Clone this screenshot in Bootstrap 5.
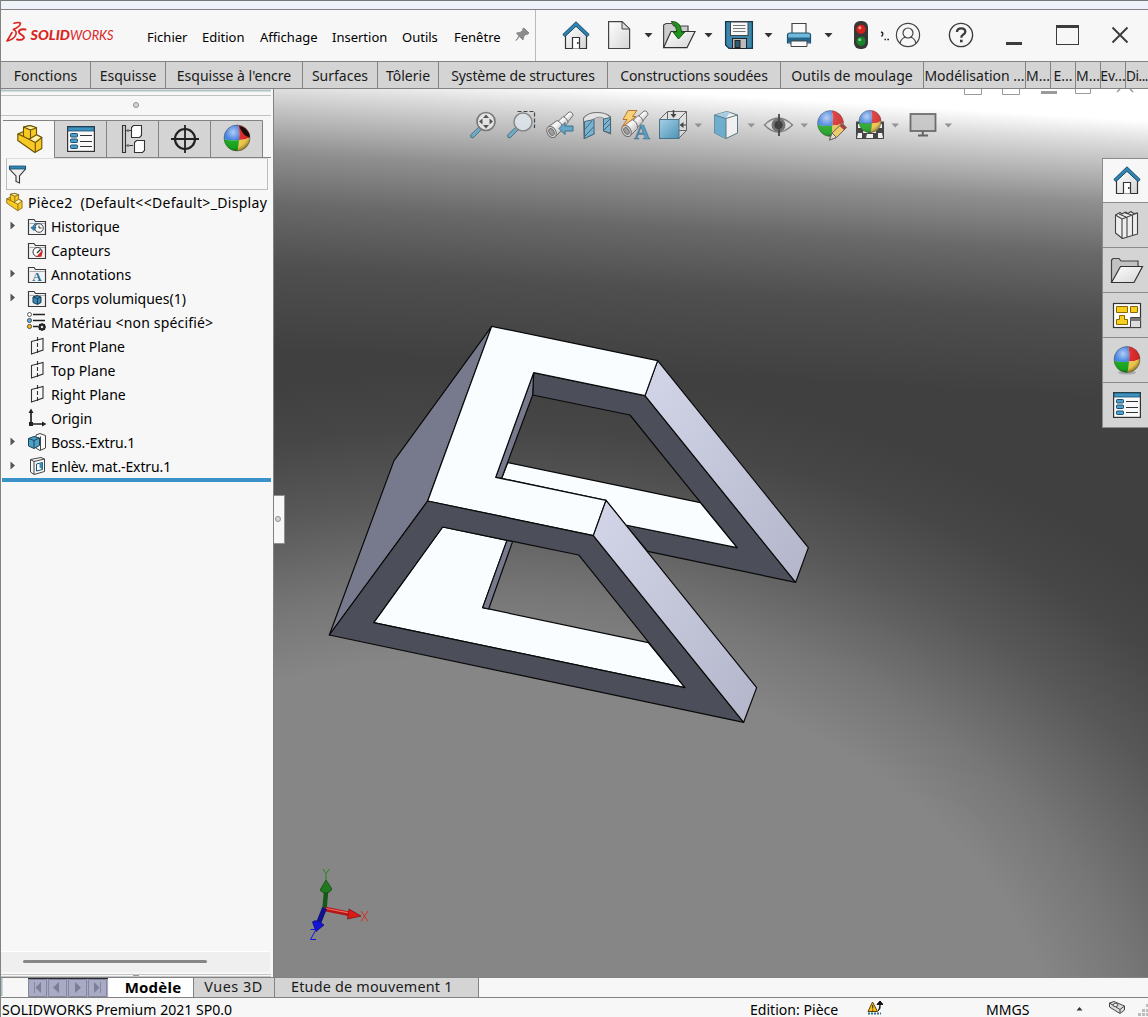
<!DOCTYPE html>
<html lang="fr">
<head>
<meta charset="utf-8">
<meta name="viewport" content="width=device-width, initial-scale=1">
<title>SOLIDWORKS Premium 2021 SP0.0</title>
<link href="https://cdn.jsdelivr.net/npm/bootstrap@5.3.0/dist/css/bootstrap.min.css" rel="stylesheet">
<style>
:root{--line:#828282;--pane:#f7f7f7;--tab:#d4d4d4}
body{width:1148px;height:1017px;overflow:hidden;background:var(--pane);font-family:"Noto Sans","Open Sans",sans-serif;font-size:14px;color:#000;line-height:1}
svg{display:block;flex:none}
.app{height:1017px;border-left:1px solid var(--line)}
.strip{height:10px;flex:none;background:#eef3fa;border-top:1px solid #777;border-bottom:1px solid var(--line)}
.head{height:51px;flex:none}
.menus{width:420px;border-right:1px solid #bbb;font-size:13px;padding-left:31px}
.menus span{white-space:nowrap;padding-top:4px}
.m1{width:55px}.m2{width:58px}.m3{width:72px}.m4{width:70px}.m5{width:52px}.m6{width:59px}
.cmds{height:28px;flex:none;background:var(--tab);border-top:1px solid var(--line);border-bottom:1px solid var(--line);font-size:14px;color:#1a1a1a}
.cmds>div{border-right:1px solid var(--line);white-space:nowrap;flex:none;padding-top:2px}
.w1{width:90px}.w2{width:75px}.w3{width:137px}.w4{width:75px}.w5{width:61px}.w6{width:169px}.w7{width:173px}.w8{width:143px}.w9{width:102px}.w10{width:25px}
.cmds>.w11{width:22px;border-right:0;font-size:13.6px;letter-spacing:-.45px}
.side{width:273px;border-right:1px solid var(--line);background:var(--pane)}
.tree-row{height:24px;white-space:nowrap;font-size:14px}
.tree-row span{padding-top:2px}
.wide{letter-spacing:.32px}
.mid{letter-spacing:.17px}
.soft{letter-spacing:.06px}
.tight{letter-spacing:-.12px}
.filter{height:32px;width:262px;margin-left:5px;border:1px solid #bdbdbd;border-top-color:#ddd}
.rollbar{height:4px;width:269px;margin-left:1px;background:#3a92c8}
.hbar{height:21px;width:269px;background:#efefef;border-top:1px solid #fff;padding:8px 0 0 22px}
.hbar div{height:3px;width:184px;border-radius:2px;background:#868686}
.view{position:relative;overflow:hidden}
.scene{position:absolute;left:0;top:0}
.hud{position:absolute;left:190px;top:15px;opacity:.88}
.taskpane{position:absolute;right:0;top:69px;width:46px;border:1px solid #8a8a8a;border-right:0;border-bottom:0}
.taskpane div{height:45px;background:var(--tab);border-bottom:1px solid #8a8a8a}
.taskpane div:first-child{background:var(--pane);height:44px}
.grip{position:absolute;left:-1px;top:406px;width:12px;height:49px;background:var(--pane);border:1px solid #8f8f8f;border-left:0}
.btabs{height:21px;flex:none;border-top:1px solid var(--line);border-bottom:1px solid var(--line);font-size:14.4px}
.btabs .t{border-right:1px solid var(--line);background:var(--tab);white-space:nowrap;color:#1a1a1a}
.btabs .t1{width:85px;font-size:15px;letter-spacing:.2px;padding-left:4px}
.btabs .t2{width:81px;padding-right:1px;letter-spacing:.5px}
.btabs .t3{width:204px;letter-spacing:.2px}
.stat{height:19px;flex:none;white-space:nowrap;font-size:14.080px;padding-top:3px;line-height:18px}
.s1{width:749px;padding-left:1px}
.s2{width:117px}
.s3{margin-top:-1px}
.s4{margin-left:103px;width:90px}
.s5{margin-top:-1px}
</style>
<script src="https://cdn.jsdelivr.net/npm/bootstrap@5.3.0/dist/js/bootstrap.bundle.min.js"></script>
</head>
<body>
<svg width="0" height="0" class="position-absolute">
<defs>
<linearGradient id="gBlue" x1="0" y1="0" x2="1" y2="1"><stop offset="0" stop-color="#9fd0ea"/><stop offset="1" stop-color="#3d8db4"/></linearGradient>
<linearGradient id="gGrey" x1="0" y1="0" x2="1" y2="1"><stop offset="0" stop-color="#fff"/><stop offset="1" stop-color="#d5d5d5"/></linearGradient>
<linearGradient id="gTube" x1="0" y1="0" x2="1" y2="1"><stop offset="0" stop-color="#c4c4c4"/><stop offset=".4" stop-color="#fff"/><stop offset="1" stop-color="#9d9d9d"/></linearGradient>
<radialGradient id="gShine" cx=".35" cy=".28" r=".75"><stop offset="0" stop-color="#fff" stop-opacity=".6"/><stop offset=".4" stop-color="#fff" stop-opacity=".05"/><stop offset=".8" stop-color="#000" stop-opacity=".05"/><stop offset="1" stop-color="#000" stop-opacity=".4"/></radialGradient>
<symbol id="home" viewBox="0 0 28 28" overflow="visible"><path d="M3.500 14V27.500H24.500V14L14 4Z" fill="url(#gGrey)" stroke="#333" stroke-width="1.200"/><path d="M10.500 27.500V16.500H17.500V27.500" fill="#fff" stroke="#333" stroke-width="1.200"/><circle cx="15.800" cy="22" r="1" fill="#333"/><path d="M.8 13.500L14 .8L27.200 13.500L25 15.500L14 5.300L3 15.500Z" fill="#2f86b5" stroke="#164a68"/></symbol>
<symbol id="ball" viewBox="0 0 28 28" overflow="visible"><clipPath id="cb"><circle cx="14" cy="14" r="13"/></clipPath><g clip-path="url(#cb)"><path d="M0 0H15Q17 7 16 16Q8 17.500 0 15Z" fill="#3f80e0"/><path d="M15 0H28V13Q22 16 16 16Q17 7 15 0Z" fill="#dc2626"/><path d="M0 15Q8 17.500 16 16Q16 23 14 28H0Z" fill="#18a81c"/><path d="M16 16Q22 16 28 13V28H14Q16 23 16 16Z" fill="#f3cb4c"/></g><circle cx="14" cy="14" r="13" fill="url(#gShine)" stroke="#333" stroke-opacity=".5" stroke-width=".8"/></symbol>
<symbol id="part" viewBox="0 0 26 28" overflow="visible"><g stroke="#6b5200" stroke-width="1.100" stroke-linejoin="round"><path d="M.8 9L6.500 6.500V2L13 .6L19.500 2.800V9.800L24.800 12.500V23.500L17.800 27.500L.8 15.500Z" fill="#f7c924"/><path d="M6.500 2L13 .6L19.500 2.800L13.500 5Z" fill="#fff0a8"/><path d="M12 14.300L19.500 9.800L24.800 12.500L18.300 17.500Z" fill="#fff0a8"/><path d="M.8 9L6.500 11.500V6.500M13.500 5V13.500M6.500 11.500L12 14.300M18.300 17.500V27" fill="none"/></g></symbol>
<symbol id="props" viewBox="0 0 28 26" overflow="visible"><rect x=".6" y=".6" width="26.800" height="24.800" fill="#fafafa" stroke="#333" stroke-width="1.200"/><rect x="1" y="1" width="26" height="4" fill="#3e92bf" stroke="#1b4f6e" stroke-width=".8"/><g fill="#4ba0cc" stroke="#1b4f6e"><rect x="3.500" y="7.500" width="7" height="3.500" rx=".8"/><rect x="3.500" y="13" width="7" height="3.500" rx=".8"/><rect x="3.500" y="19" width="7" height="3.500" rx=".8"/></g><path d="M13 9.500H25M13 15.500H25M13 20.500H25" stroke="#333" stroke-width="1.100"/></symbol>
<symbol id="fold" viewBox="0 0 18 17" overflow="visible"><path d="M.5 16.500V1.500H6L7.500 3.500H17.500V16.500Z" fill="#f2f2f2" stroke="#3a3a3a" stroke-width="1.150"/><path d="M1.500 5.500H17" stroke="#aaa" stroke-width="1"/></symbol>
<symbol id="plane" viewBox="0 0 18 18" overflow="visible"><path d="M3.500 4.500L15 1.500V13L3.500 17Z" fill="none" stroke="#333" stroke-width="1.100"/><path d="M9.500 0V18" stroke="#333" stroke-width="1.100" stroke-dasharray="4 2"/></symbol>
<symbol id="barrel" viewBox="0 0 28 28" overflow="visible"><g stroke="#666" stroke-width="1" stroke-linejoin="round"><path d="M17 7L23.500 1Q27 .5 27.500 4.500L21.500 12Z" fill="url(#gTube)"/><path d="M11 12L17.500 5.500Q22 7 22.500 11.500L16.500 18Z" fill="url(#gTube)"/><path d="M2.500 16L11.500 9.500Q17.500 12 17 18.500L9 26.500Z" fill="url(#gTube)"/><ellipse cx="6" cy="21" rx="4.300" ry="6" transform="rotate(-32 6 21)" fill="#dcdcdc"/><ellipse cx="6" cy="21" rx="2.300" ry="3.600" transform="rotate(-32 6 21)" fill="#999"/></g></symbol>
</defs>
</svg>

<div class="app d-flex flex-column">
<div class="strip"></div>

<header class="head d-flex">
<svg width="115" height="51" viewBox="1 10 115 51">
<g fill="none" stroke="#dc241f" stroke-linecap="round" stroke-linejoin="round"><path d="M14 23.300Q19.500 21.800 20.500 23.300Q20.500 26.500 13.500 29.500" stroke-width="1.600"/><path d="M13.500 29.500Q17.500 31 15.500 35.500Q13.500 39.500 7 41L12 32.500" stroke-width="1.600"/><path d="M25.500 29.500Q20 28.500 18.800 31.500Q19 33.500 22.500 35.500Q25.500 37.500 22.500 39.300Q20 40.300 17 39.500" stroke-width="1.900"/></g>
<text x="30.500" y="40.300" fill="#dc241f" font-family="Lato, sans-serif" font-style="italic" font-size="13.500" font-weight="900" textLength="39.500" lengthAdjust="spacingAndGlyphs">SOLID</text>
<text x="70" y="40.300" fill="#dc241f" font-family="Lato, sans-serif" font-style="italic" font-size="13.500" font-weight="400" textLength="43.500" lengthAdjust="spacingAndGlyphs">WORKS</text>
</svg>
<nav class="menus d-flex align-items-center">
<span class="m1">Fichier</span><span class="m2">Edition</span><span class="m3">Affichage</span><span class="m4">Insertion</span><span class="m5">Outils</span><span class="m6">Fenêtre</span>
<svg width="20" height="20" viewBox="512 26 20 20"><path d="M523 28L528 33L526.500 34.500L525 34L522.500 37L522 40L518.500 36.500L515 40.500L518 36L515.500 33L519 32.500L522 30.500L521.500 29Z" fill="#8b8b8b" stroke="#8b8b8b"/></svg>
</nav>
<div class="d-flex">
<svg width="65" height="51" viewBox="536 10 65 51"><use href="#home" x="562" y="21" width="28" height="28"/></svg>
<svg width="57" height="51" viewBox="601 10 57 51"><path d="M608.600 21.600H622L629.600 29V48.500H608.600Z" fill="url(#gGrey)" stroke="#444" stroke-width="1.200"/><path d="M622 21.600V29H629.600Z" fill="#ddd" stroke="#444"/><path d="M644.500 33H652.500L648.500 37.500Z" fill="#333"/></svg>
<svg width="60" height="51" viewBox="658 10 60 51"><path d="M663.600 47.500V25L666 23.500H672L674 26H688V32" fill="#ccc" stroke="#444" stroke-width="1.200"/><path d="M663.600 47.700L671 31.500H695L687 47.700Z" fill="url(#gGrey)" stroke="#333" stroke-width="1.200"/><path d="M671 21.500Q681 21 681.500 32H684.800L678.500 39L673 32H676.500Q677 26 671 21.500Z" fill="#22931f" stroke="#0b5a0c"/><path d="M704.500 33H712.500L708.500 37.500Z" fill="#333"/></svg>
<svg width="60" height="51" viewBox="718 10 60 51"><path d="M725.600 21.600H752.400V48.400H729L725.600 45Z" fill="#3b87ae" stroke="#16364a" stroke-width="1.300"/><rect x="730.500" y="22" width="17.500" height="13.500" fill="#f7f7f7" stroke="#444"/><path d="M733 25.500H745.500M733 28.500H745.500M733 31.500H745.500" stroke="#777"/><rect x="732.500" y="38.500" width="14" height="10" fill="#bbb" stroke="#222"/><rect x="735" y="40.500" width="5" height="7" fill="#2b5b77" stroke="#222"/><path d="M764.500 33H772.500L768.500 37.500Z" fill="#333"/></svg>
<svg width="60" height="51" viewBox="778 10 60 51"><path d="M792 34V23.500H806V34" fill="#fafafa" stroke="#444" stroke-width="1.200"/><path d="M787.500 35Q787.500 33 790 33H808Q810.500 33 810.500 35V43H787.500Z" fill="#6fb9dd" stroke="#1d4e69" stroke-width="1.200"/><path d="M787.500 37.500H810.500V42H787.500Z" fill="#24658a"/><path d="M791 41H807V46.500H791Z" fill="#fafafa" stroke="#444"/><path d="M824.500 33H832.500L828.500 37.500Z" fill="#333"/></svg>
<svg width="52" height="51" viewBox="838 10 52 51"><rect x="854" y="21" width="14" height="28" rx="6" fill="#373737"/><circle cx="861" cy="29.300" r="4.600" fill="#d8201c"/><circle cx="859.800" cy="27.800" r="1.500" fill="#ff9a92"/><circle cx="861" cy="41.300" r="4.600" fill="#17832a"/><circle cx="859.800" cy="39.800" r="1.500" fill="#86d08e"/><path d="M881 32Q884.500 33 881.500 36.500" fill="none" stroke="#222" stroke-width="1.400"/><path d="M884.500 39.500H886M887.300 39.500H889" stroke="#222" stroke-width="1.500"/></svg>
<svg width="46" height="51" viewBox="890 10 46 51" fill="none" stroke="#444" stroke-width="1.200"><circle cx="908" cy="35" r="11.600"/><circle cx="908" cy="33" r="5"/><path d="M900 43.500Q901 38.500 905 37.200M916 43.500Q915 38.500 911 37.200"/></svg>
<svg width="56" height="51" viewBox="936 10 56 51"><circle cx="961" cy="35" r="11.600" fill="none" stroke="#3c3c3c" stroke-width="1.400"/><path d="M957 32Q957 28.300 961.200 28.300Q965.300 28.300 965.300 31.700Q965.300 33.500 963 34.700Q961.300 35.700 961.300 37.700" fill="none" stroke="#3c3c3c" stroke-width="2.300"/><rect x="960" y="39.700" width="2.600" height="2.600" fill="#3c3c3c"/></svg>
<svg width="156" height="51" viewBox="992 10 156 51"><rect x="1006" y="42" width="16" height="3" fill="#3c3c3c"/><rect x="1056.500" y="26" width="22" height="18.500" fill="none" stroke="#3c3c3c"/><rect x="1056" y="25" width="23" height="3" fill="#3c3c3c"/><path d="M1112.500 27.500L1127.500 42.500M1127.500 27.500L1112.500 42.500" stroke="#3c3c3c" stroke-width="1.900"/></svg>
</div>
</header>

<nav class="cmds d-flex text-center">
<div class="w1 d-flex align-items-center justify-content-center">Fonctions</div>
<div class="w2 d-flex align-items-center justify-content-center">Esquisse</div>
<div class="w3 d-flex align-items-center justify-content-center">Esquisse à l'encre</div>
<div class="w4 d-flex align-items-center justify-content-center">Surfaces</div>
<div class="w5 d-flex align-items-center justify-content-center">Tôlerie</div>
<div class="w6 tight d-flex align-items-center justify-content-center">Système de structures</div>
<div class="w7 tight d-flex align-items-center justify-content-center">Constructions soudées</div>
<div class="w8 soft d-flex align-items-center justify-content-center">Outils de moulage</div>
<div class="w9 d-flex align-items-center justify-content-center">Modélisation ...</div>
<div class="w10 d-flex align-items-center justify-content-center">M...</div>
<div class="w10 d-flex align-items-center justify-content-center">E...</div>
<div class="w10 d-flex align-items-center justify-content-center">M...</div>
<div class="w10 d-flex align-items-center justify-content-center">Ev...</div>
<div class="w11 d-flex align-items-center justify-content-center">Di...</div>
</nav>

<main class="d-flex flex-grow-1">
<aside class="side d-flex flex-column flex-shrink-0">
<svg width="272" height="69" viewBox="1 89 272 69">
<path d="M1 90.500H271" stroke="#b4c2c6" stroke-width="2"/><path d="M1 95.500H271M1 115.500H271" stroke="#c2c2c2"/>
<circle cx="136" cy="105" r="2.500" fill="#d6d6d6" stroke="#909090"/>
<rect x="54.500" y="120.500" width="208" height="37" fill="#d4d4d4"/>
<path d="M3 120.500H262.500V157.500M54.500 120V157.500H271M106.500 120V157M158.500 120V157M210.500 120V157" fill="none" stroke="#828282"/>
<use href="#part" x="17" y="125" width="26" height="28"/>
<use href="#props" x="67" y="126" width="28" height="26"/>
<g fill="#fff" stroke="#333" stroke-width="1.100"><path d="M122.500 125.500H125.500V152.500H122.500Z" fill="#ccc"/><path d="M126 130.500H131M126 145.500H133" fill="none"/><path d="M131.500 127.500L133.500 125.500H141.500V135.500L139.500 137.500H131.500ZM134.500 142.500L136.500 140.500H144.500V150.500L142.500 152.500H134.500Z"/></g><circle cx="128" cy="130.500" r="1.500" fill="#777"/><circle cx="128" cy="145.500" r="1.500" fill="#777"/>
<g fill="none" stroke="#222"><circle cx="185" cy="139" r="10" stroke-width="2.200"/><path d="M185 125V153M171 139H199" stroke-width="1.800"/></g>
<use href="#ball" x="223" y="124" width="28" height="28"/><path d="M239 126Q248 127 250 137Q244 138 239 126Z" fill="#1c0d0d"/>
</svg>
<div class="filter"><svg width="30" height="30" viewBox="7 159 30 30"><path d="M9.500 166.500H25.500V169L19.500 176V183L16 181.500V176L9.500 169Z" fill="#eee" stroke="#333" stroke-width="1.100"/><rect x="9.500" y="166" width="16" height="3" fill="#3385b5" stroke="#1b4f6e" stroke-width=".8"/></svg></div>
<div class="tree d-flex flex-column">
<div class="tree-row d-flex align-items-center"><svg width="27" height="24" viewBox="1 190 27 24"><use href="#part" x="6" y="193" width="17" height="18"/></svg><span class="wide">Pièce2&nbsp; (Default&lt;&lt;Default&gt;_Display</span></div>
<div class="tree-row d-flex align-items-center"><svg width="50" height="24" viewBox="1 214 50 24"><path d="M10.500 221.500L15 225.500L10.500 229.500Z" fill="#555"/><use href="#fold" x="28" y="218" width="18" height="17"/><circle cx="39" cy="228" r="4.300" fill="#fff" stroke="#444"/><path d="M39 225.500V228H41.500" fill="none" stroke="#333"/><path d="M33 227Q34 223 38 223.500M33 227L31 227.500L34 230.500L36 227Z" fill="#3a88b4" stroke="#25698f"/></svg><span>Historique</span></div>
<div class="tree-row d-flex align-items-center"><svg width="50" height="24" viewBox="1 238 50 24"><use href="#fold" x="28" y="242" width="18" height="17"/><circle cx="37.500" cy="252" r="4.500" fill="#fff" stroke="#333"/><path d="M37 253L40.500 249.500" stroke="#333" stroke-width="1.300"/><path d="M38 256L41.500 252L41 256Z" fill="#d22" stroke="#d22" stroke-width="1.300"/></svg><span>Capteurs</span></div>
<div class="tree-row d-flex align-items-center"><svg width="50" height="24" viewBox="1 262 50 24"><path d="M10.500 269.500L15 273.500L10.500 277.500Z" fill="#555"/><use href="#fold" x="28" y="266" width="18" height="17"/><text x="37" y="281" text-anchor="middle" font-family="Liberation Serif, serif" font-weight="700" font-size="13" fill="#2a6d92">A</text></svg><span>Annotations</span></div>
<div class="tree-row d-flex align-items-center"><svg width="50" height="24" viewBox="1 286 50 24"><path d="M10.500 293.500L15 297.500L10.500 301.500Z" fill="#555"/><use href="#fold" x="28" y="290" width="18" height="17"/><path d="M33 297L37 295.500L41 297V302.500L37.500 304.500L33 302.500Z" fill="#3a88b4" stroke="#173f57"/><path d="M33 297L37.500 298.500L41 297M37.500 298.500V304" fill="none" stroke="#173f57"/></svg><span>Corps volumiques(1)</span></div>
<div class="tree-row d-flex align-items-center"><svg width="50" height="24" viewBox="1 310 50 24"><g stroke="#333" stroke-width=".8"><circle cx="29.500" cy="314.500" r="2" fill="#fff"/><circle cx="29.500" cy="320.500" r="2.100" fill="#5fb2e0"/><circle cx="29.500" cy="326.500" r="2.100" fill="#f3bf19"/></g><path d="M33 314.500H45M33 320.500H45M33 326.500H38" stroke="#222" stroke-width="1.500"/><circle cx="42" cy="327" r="2.500" fill="none" stroke="#222" stroke-width="2.200"/><path d="M42 323V331M38 327H46M39.200 324.200L44.800 329.800M44.800 324.200L39.200 329.800" stroke="#222" stroke-width="1.200"/><circle cx="42" cy="327" r="1.200" fill="#eee"/></svg><span class="mid">Matériau &lt;non spécifié&gt;</span></div>
<div class="tree-row d-flex align-items-center"><svg width="50" height="24" viewBox="1 334 50 24"><use href="#plane" x="28" y="337" width="18" height="18"/></svg><span class="tight">Front Plane</span></div>
<div class="tree-row d-flex align-items-center"><svg width="50" height="24" viewBox="1 334 50 24"><use href="#plane" x="28" y="337" width="18" height="18"/></svg><span class="soft">Top Plane</span></div>
<div class="tree-row d-flex align-items-center"><svg width="50" height="24" viewBox="1 334 50 24"><use href="#plane" x="28" y="337" width="18" height="18"/></svg><span>Right Plane</span></div>
<div class="tree-row d-flex align-items-center"><svg width="50" height="24" viewBox="1 406 50 24"><path d="M31 411V424H44" fill="none" stroke="#222" stroke-width="1.700"/><path d="M28.500 413L31 408.500L33.500 413ZM42 421.500L46.500 424L42 426.500ZM29 422H33V426H29Z" fill="#222"/></svg><span>Origin</span></div>
<div class="tree-row d-flex align-items-center"><svg width="50" height="24" viewBox="1 430 50 24"><path d="M10.500 437.500L15 441.500L10.500 445.500Z" fill="#555"/><path d="M36 435L40 433.500L45.500 435.500V448L40 450.500L36 448Z" fill="#fafafa" stroke="#444"/><path d="M40.500 436.500V450" stroke="#444"/><path d="M28.500 438.500L34 436.500L39.500 438V445.500L34 448.500L28.500 446Z" fill="#4fa0c6" stroke="#17445e"/><path d="M28.500 438.500L34 440.500L39.500 438M34 440.500V448" fill="none" stroke="#17445e"/></svg><span class="tight">Boss.-Extru.1</span></div>
<div class="tree-row d-flex align-items-center"><svg width="50" height="24" viewBox="1 454 50 24"><path d="M10.500 461.500L15 465.500L10.500 469.500Z" fill="#555"/><path d="M30.500 459.500L41 457.500L44.500 459V471.500L34 474.500L30.500 472Z" fill="#f7f7f7" stroke="#444"/><path d="M30.500 459.500L34 461.500L44.500 459M34 461.500V474" fill="none" stroke="#444"/><path d="M36.500 464L42.500 462.500V469.500L36.500 471Z" fill="#fff" stroke="#1c5270"/><path d="M39.500 463.500L42.500 462.500V469.500L39.500 467.500Z" fill="#3a88b4"/></svg><span class="tight">Enlèv. mat.-Extru.1</span></div>
</div>
<div class="rollbar"></div>
<div class="mt-auto">
<div class="hbar"><div></div></div>
<svg width="272" height="5" viewBox="1 972 272 5"><path d="M1 974.500H271M1 976.500H271" stroke="#c6c6c6"/><path d="M133 975.500H139" stroke="#999"/></svg>
</div>
</aside>

<section class="view flex-grow-1">
<svg class="scene" width="874" height="888" viewBox="274 89 874 888">
<defs>
<linearGradient id="sky" gradientUnits="userSpaceOnUse" x1="274" y1="68" x2="257" y2="349"><stop offset="0" stop-color="#fff"/><stop offset=".08" stop-color="#dcdcdc"/><stop offset=".14" stop-color="#c6c6c6"/><stop offset=".3" stop-color="#8f8f8f"/><stop offset=".48" stop-color="#696969"/><stop offset=".7" stop-color="#4f4f4f"/><stop offset="1" stop-color="#404040"/></linearGradient>
<radialGradient id="floor" gradientUnits="userSpaceOnUse" cx="0" cy="0" r="720" gradientTransform="translate(474 1090) scale(1.36 1)"><stop offset=".6" stop-color="#868686"/><stop offset=".69" stop-color="#868686" stop-opacity=".78"/><stop offset=".82" stop-color="#868686" stop-opacity=".34"/><stop offset=".92" stop-color="#868686" stop-opacity=".09"/><stop offset="1" stop-color="#868686" stop-opacity="0"/></radialGradient>
<linearGradient id="slope" x1="0" y1="0" x2="1" y2="1"><stop offset="0" stop-color="#d3d5e8"/><stop offset="1" stop-color="#b3b5ca"/></linearGradient>
</defs>
<rect x="274" y="89" width="874" height="888" fill="url(#sky)"/>
<rect x="274" y="89" width="874" height="888" fill="url(#floor)"/>
<g fill="none" stroke="#9a9a9a"><path d="M964.500 89V94.500H981.500V89M1002.500 89V94.500H1019.500V89M1075.500 89V93.500H1090.500V89"/><path d="M1117 92L1120 89M1133 92L1130 89" stroke-width="1.500"/><path d="M1041 92.500H1057" stroke-width="3"/></g>
<g transform="translate(320 310) scale(.33333)" stroke="#0a0a0a" stroke-width="3.600" stroke-linejoin="round">
<path d="M641 188L975 257L1427 817L983 724L917 645L1251 713L930 315L638 255Z" fill="#4c4e59"/>
<path d="M563 458L1141 578L1251 713L917 645L858 571L545 505Z" fill="#fafdff"/>
<path d="M641 188L638 255L545 505L527 502Z" fill="#777a8c"/>
<path d="M1013 152L1465 713L1427 817L975 257Z" fill="url(#slope)"/>
<path d="M515 49L323 573L28 975L222 452Z" fill="#777a8c"/>
<path d="M515 49L1013 152L975 257L641 188L527 502L858 571L820 677L323 573Z" fill="#fafdff"/>
<path d="M368 651L561 691L488 893L985 998L1095 1133L161 938Z" fill="#fafdff"/>
<path d="M561 691L578 694L506 897L488 893Z" fill="#777a8c"/>
<path fill-rule="evenodd" d="M323 573L820 677L1271 1237L28 975ZM368 651L776 735L1095 1133L161 938Z" fill="#4c4e59"/>
<path d="M858 571L1310 1133L1271 1237L820 677Z" fill="url(#slope)"/>
</g>
<g stroke-linecap="butt">
<path d="M324.500 909L326 892" stroke="#155a15" stroke-width="4.500"/><path d="M320 890L326 880L332 889Q330 893 326 893Q322 893 320 890Z" fill="#1f7a1f" stroke="#123f12" stroke-width=".7"/>
<path d="M325 909L350 914" stroke="#b51412" stroke-width="4.500"/><path d="M326 908.500L350 913.200" stroke="#ee6a60" stroke-width="1.200"/><path d="M349 909L361 916L347.500 919Z" fill="#dc1a16" stroke="#7c0c0a" stroke-width=".7"/>
<path d="M324.500 908L319 922" stroke="#11118c" stroke-width="5"/><path d="M312.500 922Q316 918.500 324 925L316 931.500Z" fill="#1414d8" stroke="#0b0b7a" stroke-width=".8"/>
<g fill="none" stroke-width="1"><path d="M323 869L326 873.500L329.500 869M326 873.500V880" stroke="#1d8a1d"/><path d="M361 911L368 921.500M368 911L361 921.500" stroke="#e02a24"/><path d="M310.500 929.500H316L310.500 939.500H316" stroke="#1414e0"/></g>
</g>
</svg>

<div class="hud d-flex" role="toolbar">
<svg width="38" height="42" viewBox="464 104 38 42"><path d="M470.500 135L479 127L481.500 129.500L473 138Q470 138 470.500 135Z" fill="#68a8c8" stroke="#42697f"/><circle cx="486" cy="121.500" r="9" fill="#eee" fill-opacity=".85" stroke="#707070" stroke-width="1.700"/><path d="M486 114.500L489 118H483ZM486 128.500L489 125H483ZM479 121.500L482.500 118.500V124.500ZM493 121.500L489.500 118.500V124.500Z" fill="#444"/></svg>
<svg width="40" height="42" viewBox="502 104 40 42"><path d="M517.500 111.500H534.500V128" fill="none" stroke="#333" stroke-width="1.200" stroke-dasharray="4 2"/><path d="M507.500 135L516 127L518.500 129.500L510 138Q507 138 507.500 135Z" fill="#68a8c8" stroke="#42697f"/><circle cx="523" cy="122" r="9" fill="#e0e8ee" fill-opacity=".9" stroke="#808080" stroke-width="1.500"/></svg>
<svg width="37" height="42" viewBox="542 104 37 42"><use href="#barrel" x="545.500" y="111" width="28" height="28"/><path d="M559 128.500L565 122.500V126H573V131H565V134.500Z" fill="#5aa4cc" stroke="#2c6585"/></svg>
<svg width="37" height="42" viewBox="579 104 37 42"><path d="M583.500 118Q588 112.500 597 112.500Q606 112.500 610.500 117V134L603.500 131V118.500Q599 116 594 119V134L584 138.500Z" fill="#e6e6e6" stroke="#666" stroke-width="1.100"/><path d="M594 119Q599 116 603.500 118.500V131Q599 128 594 133Z" fill="#bbb"/><path d="M584.500 121.500L594 119.500V134L584.500 138.500ZM603.500 119L610.500 117.500V133L603.500 131Z" fill="#6db2d4" stroke="#34586c"/><path d="M585 129L592 121M585 136L593.500 127M604 125L610 119M604 130L610 124" stroke="#34586c"/></svg>
<svg width="38" height="42" viewBox="616 104 38 42"><use href="#barrel" x="620.500" y="110" width="28" height="28"/><path d="M628 110.500H637L632.500 116.500H636L622 127L627 119.500H623Z" fill="#f9d368" stroke="#bb6527"/><text x="642" y="139" text-anchor="middle" font-family="Liberation Serif, serif" font-weight="700" font-size="22" fill="#4e9ac2" stroke="#2c6585" stroke-width=".6">A</text></svg>
<svg width="54" height="42" viewBox="654 104 54 42"><g fill="#e8e8e8" fill-opacity=".6" stroke="#555"><path d="M659.500 119.500L667.500 111.500H686.500V130.500L678.500 138.500"/><path d="M667.500 111.500V119M678.500 119.500L686.500 111.500M686.500 130.500H679" fill="none"/></g><rect x="659.500" y="119.500" width="19.500" height="19" fill="url(#gBlue)" stroke="#3a667e"/><path d="M673.500 110V115" stroke="#333" stroke-width="1.500"/><path d="M670.500 114H676.500L673.500 118ZM679.500 125L683.500 122V128ZM683 124.500H686V125.500H683Z" fill="#333"/><path d="M694.500 123.500H702L698.300 127.500Z" fill="#8a8a8a"/></svg>
<svg width="52" height="42" viewBox="708 104 52 42"><path d="M714.500 115L727 111.500L737.500 115V133L726 138.500L714.500 133Z" fill="#f4f4f4" stroke="#4c6876"/><path d="M714.500 115L726 118V138.500L714.500 133Z" fill="#62a9cd"/><path d="M714.500 115L727 111.500L730 112.500L726 118Z" fill="#9ecbe2"/><path d="M714.500 115L726 118.500L737.500 115M726 118.500V138" fill="none" stroke="#4c6876"/><path d="M747.500 123.500H755L751.300 127.500Z" fill="#8a8a8a"/></svg>
<svg width="52" height="42" viewBox="760 104 52 42"><path d="M764.500 125Q778 111 792.500 125Q778 139 764.500 125Z" fill="#ddd" stroke="#777" stroke-width="1.400"/><circle cx="778.500" cy="125" r="7" fill="#666"/><circle cx="778.500" cy="125" r="4" fill="#2b2b2b"/><path d="M779 114V136" stroke="#333" stroke-width="1.800"/><path d="M800.500 123.500H808L804.300 127.500Z" fill="#8a8a8a"/></svg>
<svg width="40" height="42" viewBox="812 104 40 42"><use href="#ball" x="816.500" y="109.500" width="28" height="28"/><path d="M829.500 140L832 133L842 123.500L846.500 127.500L836.500 137.500Z" fill="#f3c95c" stroke="#555"/><path d="M842 123.500L846.500 127.500L844 130L839.500 126Z" fill="#a22f2f"/><path d="M829.500 140L832 133L836.500 137.500Z" fill="#eedfc5" stroke="#555"/></svg>
<svg width="52" height="42" viewBox="852 104 52 42"><path d="M856 121.500H884V139H856Z" fill="#333"/><path d="M858 124H862V128H858ZM864 128H868V133H863ZM858 133H862V138H857ZM878 124H882V128H878ZM872 128H876V133H872ZM867 134H873V138H866ZM878 133H882L883 138H878Z" fill="#f5f5f5"/><use href="#ball" x="858" y="109.500" width="24" height="24"/><path d="M891.500 123.500H899L895.300 127.500Z" fill="#8a8a8a"/></svg>
<svg width="52" height="42" viewBox="904 104 52 42"><rect x="910.500" y="114" width="25" height="17" fill="#c4c4c4" stroke="#5c5c5c" stroke-width="1.800"/><path d="M922.800 131V135M918 135.500H928" stroke="#555" stroke-width="2"/><path d="M944.500 123.500H952L948.300 127.500Z" fill="#8a8a8a"/></svg>
</div>

<div class="taskpane">
<div><svg width="45" height="43" viewBox="1103 159 45 43"><use href="#home" x="1113" y="166" width="28" height="28"/></svg></div>
<div><svg width="45" height="44" viewBox="1103 203 45 44"><g stroke="#444" stroke-width="1.100" stroke-linejoin="round" fill="#eee"><path d="M1115.500 215L1120 212.500L1122 214L1125.500 212L1128 213.500L1131 211.500L1133.500 213.500L1137.500 213V234L1122.500 238.500L1115.500 233Z"/><path d="M1115.500 215L1122 219V238.500M1122 219L1137.500 213M1127 217V237M1132.500 215.500V235.500M1119 214L1126 217M1125 213L1132 215" fill="none"/></g></svg></div>
<div><svg width="45" height="44" viewBox="1103 248 45 44"><path d="M1111.500 282.500V260L1113 258.500H1119L1121 261H1138V267" fill="#c2c2c2" stroke="#444" stroke-width="1.200"/><path d="M1111.500 282.500L1120.500 266.500H1142.500L1134 282.500Z" fill="url(#gGrey)" stroke="#333" stroke-width="1.200"/></svg></div>
<div><svg width="45" height="44" viewBox="1103 293 45 44"><rect x="1113.500" y="303.500" width="27" height="24" fill="#fff" stroke="#333" stroke-width="1.200"/><g fill="#f8cf1c" stroke="#8a6500"><path d="M1116.500 306.500H1127.500V312.500H1116.500ZM1130.500 306.500H1137.500V312.500H1130.500ZM1119.500 315.500H1124.500V319.500H1127.500V324.500H1116.500V319.500H1119.500Z"/></g><path d="M1130.500 317.500H1140.500V327.500H1130.500Z" fill="#ddd" stroke="#444"/><path d="M1130.500 319.500H1140.500" stroke="#777" stroke-width="3"/></svg></div>
<div><svg width="45" height="44" viewBox="1103 338 45 44"><ellipse cx="1127" cy="372.500" rx="9" ry="2" fill="#aaa"/><use href="#ball" x="1113" y="345.500" width="28" height="28"/></svg></div>
<div><svg width="45" height="44" viewBox="1103 383 45 44"><use href="#props" x="1113" y="392" width="28" height="26"/></svg></div>
</div>
<div class="grip d-flex align-items-center"><svg width="10" height="10" viewBox="0 1 10 10"><circle cx="5" cy="5" r="2.500" fill="#d6d6d6" stroke="#909090"/></svg></div>
</section>
</main>

<nav class="btabs d-flex">
<svg width="108" height="19" viewBox="1 978 108 19"><path d="M1.500 978V996" stroke="#a4bcc0" stroke-width="2"/><rect x="28" y="978" width="80" height="19" fill="#a8abc3"/><path d="M28 978H108" stroke="#000" stroke-width="1.500"/><g fill="none" stroke="#8587a0"><path d="M28.500 979.500H46.500V996.500H28.500ZM48.500 979.500H66.500V996.500H48.500ZM68.500 979.500H86.500V996.500H68.500ZM88.500 979.500H106.500V996.500H88.500Z"/><path d="M34.500 982V993M100.500 982V993"/></g><path d="M41 982V993L35.500 987.500ZM59 982V993L53 987.500ZM75 982V993L81 987.500ZM94 982V993L99.500 987.500Z" fill="#7b7e98"/></svg>
<div class="t t1 d-flex align-items-center justify-content-center fw-bold bg-white text-black">Modèle</div>
<div class="t t2 d-flex align-items-center justify-content-center">Vues 3D</div>
<div class="t t3 d-flex align-items-center ps-3">Etude de mouvement 1</div>
</nav>

<footer class="stat d-flex">
<span class="s1">SOLIDWORKS Premium 2021 SP0.0</span>
<span class="s2">Edition: Pièce</span>
<svg class="s3" width="16" height="16" viewBox="867 1001 16 16"><path d="M868 1012.500L872.500 1003L877.500 1012.500Z" fill="#f7bd1b" stroke="#5c4300"/><path d="M872.700 1006V1009.500M872.700 1010.500V1011.700" stroke="#222"/><path d="M878 1012Q881 1010 880 1005M877 1005.500L880 1002L883 1005.500Z" fill="#111" stroke="#111"/><path d="M868 1014.500H881" stroke="#2e7096" stroke-width="2" stroke-dasharray="2 1"/></svg>
<span class="s4">MMGS</span>
<svg class="s5" width="72" height="16" viewBox="1076 1001 72 16"><path d="M1076.500 1011.500L1079.500 1008L1082.500 1011.500Z" fill="#333"/><path d="M1109.500 1004L1114 1002.500L1124.500 1007V1011L1120 1014.500L1109.500 1008Z" fill="#ddd" stroke="#444"/><path d="M1109.500 1004L1120 1010.500L1124.500 1007M1120 1010.500V1014" fill="none" stroke="#444"/><ellipse cx="1115.500" cy="1006" rx="2.500" ry="1.500" fill="#fff" stroke="#444"/><path d="M1146 1005h3v3h-3zM1142 1010h3v3h-3zM1146 1010h3v3h-3zM1138 1014h3v3h-3zM1142 1014h3v3h-3zM1146 1014h3v3h-3z" fill="#bcbcbc"/></svg>
</footer>
</div>
</body>
</html>
